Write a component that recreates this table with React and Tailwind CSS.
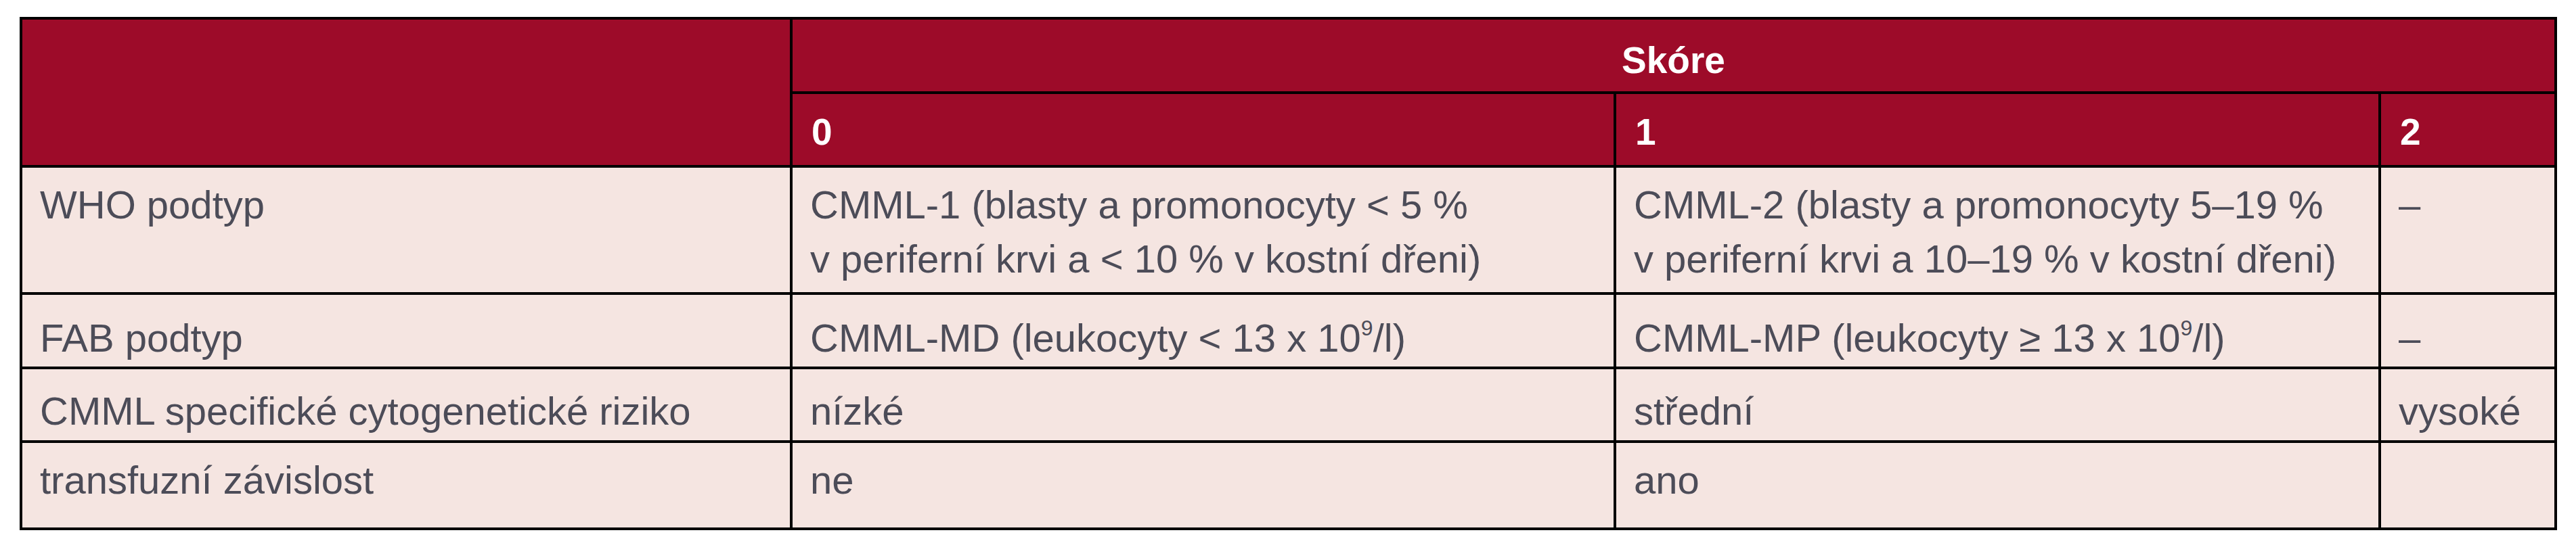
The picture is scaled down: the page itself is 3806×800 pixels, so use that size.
const rows = [
  {
    label: "WHO podtyp",
    cells: [
      ["CMML-1 (blasty a promonocyty < 5 %", "v periferní krvi a < 10 % v kostní dřeni)"],
      ["CMML-2 (blasty a promonocyty 5–19 %", "v periferní krvi a 10–19 % v kostní dřeni)"],
      ["–"],
    ],
    h: "h-[188px]",
    pt: "pt-[15px]",
  },
  {
    label: "FAB podtyp",
    cells: [
      [<>CMML-MD (leukocyty &lt; 13 x 10<sup className="text-[32px] relative -top-[24px] align-baseline">9</sup>/l)</>],
      [<>CMML-MP (leukocyty ≥ 13 x 10<sup className="text-[32px] relative -top-[24px] align-baseline">9</sup>/l)</>],
      ["–"],
    ],
    h: "h-[110px]",
    pt: "pt-[24px]",
  },
  {
    label: "CMML specifické cytogenetické riziko",
    cells: [["nízké"], ["střední"], ["vysoké"]],
    h: "h-[109px]",
    pt: "pt-[22px]",
  },
  {
    label: "transfuzní závislost",
    cells: [["ne"], ["ano"], [""]],
    h: "h-[129px]",
    pt: "pt-[15px]",
  },
];

const App = () => {
  return (
    <div className="w-[3806px] h-[800px] bg-white pt-[25px] pl-[29px] font-['Liberation_Sans',Arial,sans-serif]">
      <table className="table-fixed border-collapse w-[3749px] border-[4px] border-black">
        <colgroup>
          <col className="w-[1138px]" />
          <col className="w-[1217px]" />
          <col className="w-[1130px]" />
          <col className="w-[260px]" />
        </colgroup>
        <thead className="bg-[#9d0b29] text-white font-bold text-[55px] leading-[64px]">
          <tr className="h-[110px]">
            <th rowSpan={2} className="border-[4px] border-black" />
            <th colSpan={3} className="border-[4px] border-black text-center align-top pt-[28px]">
              Skóre
            </th>
          </tr>
          <tr className="h-[109px]">
            <th className="border-[4px] border-black text-left align-top pl-[28px] pt-[24px]">0</th>
            <th className="border-[4px] border-black text-left align-top pl-[28px] pt-[24px]">1</th>
            <th className="border-[4px] border-black text-left align-top pl-[28px] pt-[24px]">2</th>
          </tr>
        </thead>
        <tbody className="bg-[#f5e5e1] text-[#4c4c58] text-[58px] leading-[80px]">
          {rows.map((row) => (
            <tr key={row.label} className={row.h}>
              <td className={`border-[4px] border-black align-top pl-[26px] ${row.pt}`}>
                {row.label}
              </td>
              {row.cells.map((lines, i) => (
                <td
                  key={i}
                  className={`border-[4px] border-black align-top pl-[26px] whitespace-nowrap ${row.pt}`}
                >
                  {lines.map((line, j) => (
                    <div key={j}>{line}</div>
                  ))}
                </td>
              ))}
            </tr>
          ))}
        </tbody>
      </table>
    </div>
  );
};

export default App;
